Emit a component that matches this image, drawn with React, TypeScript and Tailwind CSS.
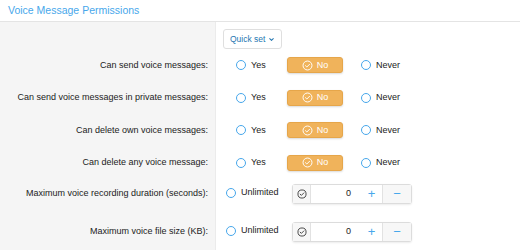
import { ChevronDown } from "lucide-react";

const font = { fontFamily: '"Liberation Sans", Arial, sans-serif' };

const Radio = ({ label }: { label: string }) => (
  <label className="flex items-center gap-[5px] text-[9px] text-[#222]">
    <span className="w-[10px] h-[10px] rounded-full border border-[#47a7eb] bg-white" />
    <span>{label}</span>
  </label>
);

const CheckCircle = ({ className }: { className: string }) => (
  <svg viewBox="0 0 16 16" className={className} fill="none" stroke="currentColor" strokeWidth="1.4">
    <circle cx="8" cy="8" r="6.5" />
    <path d="M5 8.2l2 2 4-4" strokeLinecap="round" strokeLinejoin="round" />
  </svg>
);

const Label = ({ children, h }: { children: string; h: string }) => (
  <div className={`${h} bg-[#f5f5f5] border-r border-[#ebebeb] flex items-center justify-end pr-[7px] text-[9px] text-[#222] whitespace-nowrap`}>
    {children}
  </div>
);

const TriRow = ({ label }: { label: string }) => (
  <>
    <Label h="h-[32.5px]">{label}</Label>
    <div className="h-[32.5px] flex items-center pl-[20px]">
      <div className="w-[51px]">
        <Radio label="Yes" />
      </div>
      <div className="w-[56px] h-[16px] rounded-[3px] bg-[#f0b35b] border border-[#e6a64a] shadow-[0_1px_2px_rgba(0,0,0,0.15)] flex items-center justify-center gap-[4px] text-white text-[9px]">
        <CheckCircle className="w-[11px] h-[11px]" />
        <span>No</span>
      </div>
      <div className="ml-[18px]">
        <Radio label="Never" />
      </div>
    </div>
  </>
);

const SpinRow = ({ label, h }: { label: string; h: string }) => (
  <>
    <Label h={h}>{label}</Label>
    <div className={`${h} flex items-center pl-[10px]`}>
      <div className="w-[66px] -mt-[2px]">
        <Radio label="Unlimited" />
      </div>
      <div className="w-[120px] h-[20px] flex rounded-[3px] border border-[#dcdcdc] bg-white shadow-[0_1px_2px_rgba(0,0,0,0.08)] text-[9px]">
        <div className="w-[18px] flex items-center justify-center border-r border-[#e2e2e2] bg-[#f7f7f7] text-[#333]">
          <CheckCircle className="w-[10px] h-[10px]" />
        </div>
        <div className="flex-1 flex items-center justify-end pr-[10px] text-[#222]">0</div>
        <div className="w-[22px] flex items-center justify-center text-[#47a7eb] text-[13px] border-r border-[#e2e2e2]">+</div>
        <div className="w-[28px] flex items-center justify-center bg-[#f7f7f7] text-[#47a7eb] text-[13px]">−</div>
      </div>
    </div>
  </>
);

export default function App() {
  return (
    <div className="w-[520px] h-[250px] overflow-hidden bg-white" style={font}>
      <div className="h-[22px] border-b border-[#e4e4e4] flex items-center pl-[8px] text-[10.5px] text-[#47a7eb]">
        Voice Message Permissions
      </div>
      <div className="grid grid-cols-[216px_1fr]">
        <div className="h-[27px] bg-[#f5f5f5] border-r border-[#ebebeb]" />
        <div className="h-[27px] flex items-end pl-[7px]">
          <button className="h-[20px] px-[6px] flex items-center gap-[3px] rounded-[3px] border border-[#dfdfdf] bg-white text-[8.5px] text-[#2577b1]">
            Quick set
            <ChevronDown className="w-[7px] h-[7px]" strokeWidth={3.5} />
          </button>
        </div>
        <TriRow label="Can send voice messages:" />
        <TriRow label="Can send voice messages in private messages:" />
        <TriRow label="Can delete own voice messages:" />
        <TriRow label="Can delete any voice message:" />
        <SpinRow label="Maximum voice recording duration (seconds):" h="h-[30px]" />
        <SpinRow label="Maximum voice file size (KB):" h="h-[46px]" />
      </div>
    </div>
  );
}
